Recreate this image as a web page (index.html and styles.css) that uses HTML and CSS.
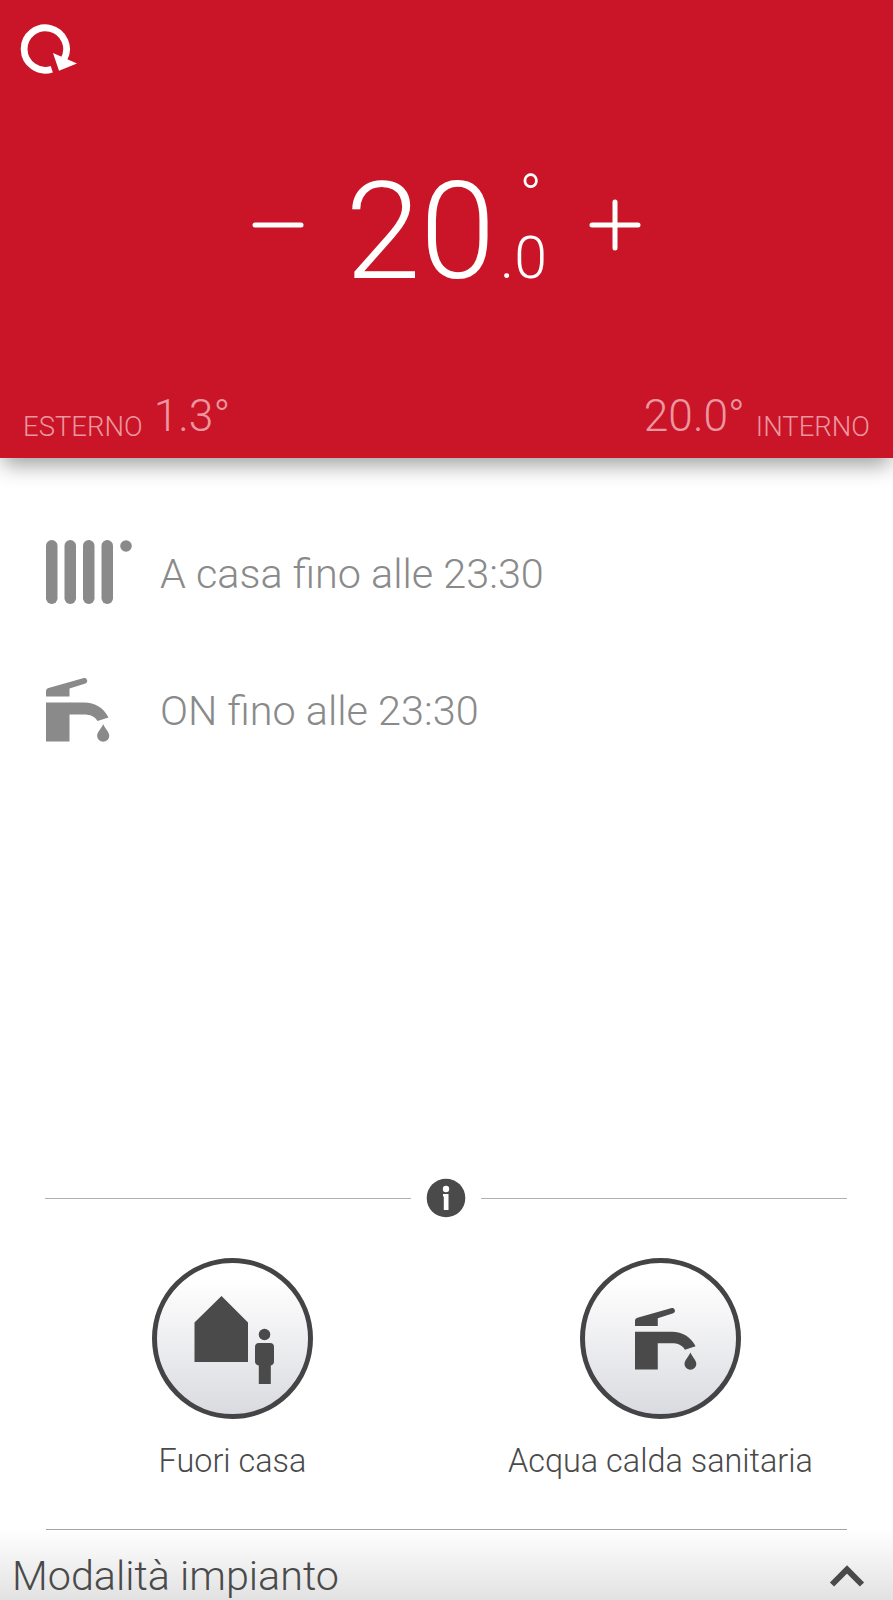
FILE: index.html
```html
<!DOCTYPE html>
<html lang="it">
<head>
    <meta charset="UTF-8">
    <meta name="viewport" content="width=device-width, initial-scale=1.0">
    <title>Termostato</title>
    <link rel="stylesheet" href="styles.css">
</head>

<body>

<!-- Shared icons -->
<svg class="icon-defs" width="0" height="0">
    <symbol id="tap" viewBox="0 0 64 64">
        <path d="M0 18.500V13Q0 10.500 2.500 10L37 .3A2.800 2.800 0 0 1 39.500 5.500L23.500 10.500V18.500Z"/>
        <path d="M0 24.500H38C49 24.500 58 30 62.500 39.500L51.500 43C49 38.500 44 36.500 38 36.500H23.500V63.500H0Z"/>
        <path d="M57.200 46C59 50.500 63.300 54 63.300 57.800A6.100 6 0 0 1 51.100 57.800C51.100 54 55.400 50.500 57.200 46Z"/>
    </symbol>
</svg>

<div class="app">

<!-- Temperature panel -->
<header class="panel">
    <div class="toolbar">
        <svg class="refresh" width="60" height="54" viewBox="0 0 60 54">
            <path d="M31.800 46.200A21.200 21.200 0 1 1 43.700 36.600" fill="none" stroke="#fff" stroke-width="6.800"/>
            <path d="M33 30L57 40.500L39 47.800Z" fill="#fff"/>
        </svg>
    </div>

    <div class="dial">
        <svg class="minus" width="52" height="52" viewBox="0 0 52 52">
            <path d="M3 26H49"/>
        </svg>
        <div class="temp">
            <span class="whole">20</span>
            <div class="side">
                <span class="degree">°</span>
                <span class="decimal">.0</span>
            </div>
        </div>
        <svg class="plus" width="52" height="52" viewBox="0 0 52 52">
            <path d="M3 26H49M26 3V49"/>
        </svg>
    </div>

    <div class="readings">
        <div class="reading"><span class="name">ESTERNO</span><span class="value">1.3°</span></div>
        <div class="reading"><span class="value">20.0°</span><span class="name">INTERNO</span></div>
    </div>
</header>

<!-- Status rows -->
<main class="status">
    <div class="status-row">
        <svg class="status-icon radiator" width="114" height="64" viewBox="0 0 114 64">
            <rect x="0" y="0" width="11.500" height="64" rx="5.700"/>
            <rect x="18.500" y="0" width="11.500" height="64" rx="5.700"/>
            <rect x="37" y="0" width="11.500" height="64" rx="5.700"/>
            <rect x="55.500" y="0" width="11.500" height="64" rx="5.700"/>
            <circle cx="80" cy="6" r="5.800"/>
        </svg>
        <p>A casa fino alle 23:30</p>
    </div>
    <div class="status-row">
        <svg class="status-icon" width="114" height="64"><use href="#tap" width="64" height="64"/></svg>
        <p>ON fino alle 23:30</p>
    </div>
</main>

<div class="divider">
    <svg width="40" height="40" viewBox="0 0 40 40">
        <circle cx="20" cy="20" r="19.300" fill="#4a4a4a"/>
        <circle cx="20" cy="11" r="3.200" fill="#fff"/>
        <path d="M17 16H22.500V32H17.800V18.500H17Z" fill="#fff"/>
    </svg>
</div>

<!-- Quick actions -->
<section class="actions">
    <div class="action">
        <div class="round">
            <svg width="150" height="150" viewBox="0 0 150 150">
                <path d="M36.500 58.500L63.500 32L90 58.500V98H36.500Z"/>
                <circle cx="106.500" cy="70.500" r="5.800"/>
                <path d="M101 79H112Q116 79 116 83V97.500Q116 100.500 112.800 101.500V120H100.800V101.500Q97 100.500 97 97.500V83Q97 79 101 79Z"/>
            </svg>
        </div>
        <p>Fuori casa</p>
    </div>
    <div class="action">
        <div class="round">
            <svg class="tap" width="62" height="62"><use href="#tap"/></svg>
        </div>
        <p>Acqua calda sanitaria</p>
    </div>
</section>

<!-- Bottom drawer -->
<footer class="drawer">
    <div class="line"></div>
    <div class="drawer-bar">
        <span>Modalità impianto</span>
        <svg width="36" height="24" viewBox="0 0 36 24">
            <path d="M3 20.500L18 5.500L33 20.500" fill="none" stroke="#4a4a4a" stroke-width="6"/>
        </svg>
    </div>
</footer>

</div>

</body>
</html>
```
FILE: styles.css
```css
body {
    margin: 0;
    background-color: #fff;
    font-family: Roboto, sans-serif;
    font-weight: 300;
}

p {
    margin: 0;
}

.icon-defs {
    display: block;
}

.app {
    display: flex;
    flex-direction: column;
    width: 893px;
    height: 1600px;
    overflow: hidden;
}

/* Temperature panel */
.panel {
    height: 458px;
    flex: none;
    background-color: #c91527;
    color: #fff;
    box-shadow: 0 10px 20px -3px rgba(0,0,0,.38);
}

.toolbar {
    height: 55px;
    padding: 23px 0 0 20px;
}

.dial {
    display: flex;
    justify-content: center;
    align-items: center;
    height: 250px;
    padding-top: 22px;
}

.minus, .plus {
    fill: none;
    stroke: #fff;
    stroke-width: 5;
    stroke-linecap: round;
}

.temp {
    display: flex;
    padding: 13px 42px 0 41px;
}

.whole {
    font-size: 136px;
    line-height: 138px;
    letter-spacing: -.5px;
}

.side {
    display: flex;
    flex-direction: column;
    align-items: flex-end;
    padding-top: 3px;
    margin-left: 5px;
    font-size: 59px;
    line-height: 60px;
}

.degree {
    height: 62px;
    padding-right: 5px;
}

.readings {
    display: flex;
    justify-content: space-between;
    height: 60px;
    padding: 43px 23px 0;
    color: #ec97a0;
}

.reading {
    display: flex;
    gap: 11px;
}

.name {
    padding-top: 14px;
    font-size: 27.5px;
    line-height: 40px;
}

.value {
    font-size: 44.3px;
    line-height: 46px;
}

/* Status rows */
.status {
    height: 674px;
    padding: 46px 0 0 46px;
}

.status-row {
    display: flex;
    align-items: center;
    height: 137px;
    color: #8a8a8a;
    font-size: 41.4px;
}

.status-icon {
    fill: #8a8a8a;
}

.radiator {
    margin-bottom: 2px;
}

.status-row p {
    padding-top: 2px;
}

/* Line with the info icon in the middle */
.divider {
    display: flex;
    align-items: center;
    gap: 15px;
    height: 40px;
    padding: 0 46px 0 45px;
}

.divider::before, .divider::after {
    content: "";
    flex: 1;
    height: 1px;
    background-color: #b0b0b0;
}

/* Quick actions */
.actions {
    display: grid;
    grid-template-columns: 428px 428px;
    justify-content: center;
    height: 311px;
}

.action {
    display: flex;
    flex-direction: column;
    align-items: center;
    padding-top: 40px;
    color: #4a4a4a;
    font-size: 32.4px;
    line-height: 40px;
}

.round {
    display: flex;
    justify-content: center;
    align-items: center;
    width: 151px;
    height: 151px;
    margin-bottom: 22px;
    border: 5px solid #444446;
    border-radius: 50%;
    background: linear-gradient(#fff 10%, #dadbe0);
    fill: #4a4a4a;
}

.tap {
    margin-left: 10px;
}

/* Bottom drawer */
.drawer {
    height: 71px;
    background: linear-gradient(#fff, #e2e2e2);
    color: #4a4a4a;
}

.line {
    height: 1px;
    margin: 0 46px;
    background-color: #a5a5a5;
}

.drawer-bar {
    display: flex;
    justify-content: space-between;
    align-items: center;
    height: 70px;
    padding: 0 28px 0 12px;
    font-size: 41.3px;
}

.drawer-bar span {
    padding-top: 22px;
}

.drawer-bar svg {
    margin-top: 22px;
}
```
